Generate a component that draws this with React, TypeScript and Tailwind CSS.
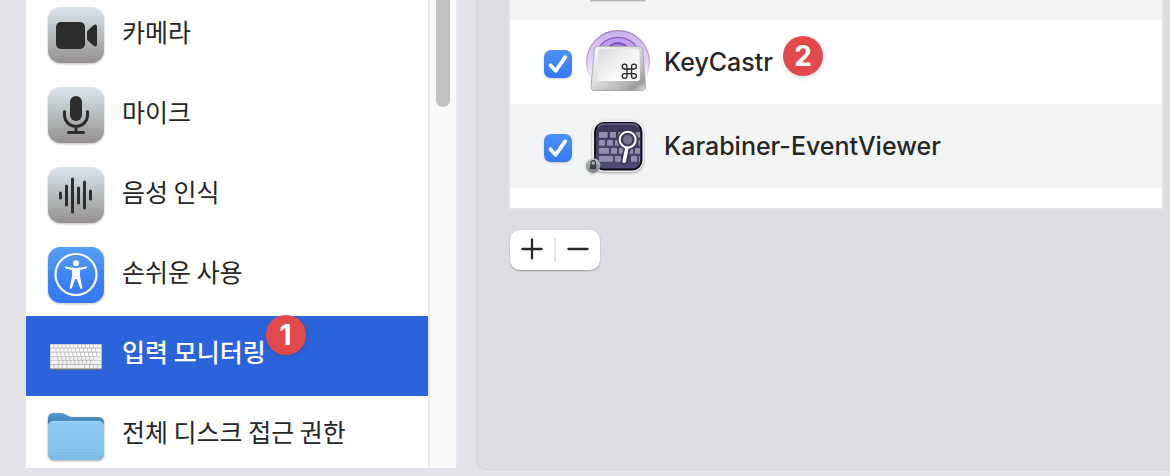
import { useState, type ReactNode } from "react";

function Tile({ tone, children }: { tone: "gray" | "blue"; children: ReactNode }) {
  return (
    <svg viewBox="0 0 56 56" className="h-14 w-14 shrink-0 overflow-visible drop-shadow-[0_1px_1px_rgba(0,0,0,0.25)]" aria-hidden="true">
      <defs>
        <linearGradient id="tile-gray" x1="0" y1="0" x2="0" y2="1">
          <stop offset="0" stopColor="#d9e5ec" />
          <stop offset="0.5" stopColor="#b7bcbe" />
          <stop offset="1" stopColor="#959190" />
        </linearGradient>
        <linearGradient id="tile-blue" x1="0" y1="0" x2="0" y2="1">
          <stop offset="0" stopColor="#55a0f7" />
          <stop offset="0.6" stopColor="#3b80f5" />
          <stop offset="1" stopColor="#3478f6" />
        </linearGradient>
      </defs>
      <rect width="56" height="56" rx="12.5" fill={tone === "gray" ? "url(#tile-gray)" : "url(#tile-blue)"} />
      {children}
    </svg>
  );
}

function CameraIcon() {
  return (
    <Tile tone="gray">
      <rect x="8" y="15" width="29" height="27" rx="5" fill="#2d2d2d" />
      <path d="M39 25.5V31.500q0 1.500 1.200 2.500l5.300 4.800q3.500 2 3.500-1.500V19.700q0-3.500-3.500-1.500L40.200 23q-1.200 1-1.200 2.500z" fill="#2d2d2d" />
    </Tile>
  );
}

function MicIcon() {
  return (
    <Tile tone="gray">
      <rect x="22" y="9" width="12" height="25" rx="6" fill="#2d2d2d" />
      <path d="M16.500 24.500v3.500a11.500 11.500 0 0 0 23 0v-3.500M28 39.500v6M20.500 45.500h15" fill="none" stroke="#2d2d2d" strokeWidth="3" strokeLinecap="round" />
    </Tile>
  );
}

function VoiceIcon() {
  return (
    <Tile tone="gray">
      <path d="M12.500 26v5M18.500 19v19M24.500 12v33M30.500 21v15M36.500 15v26M42.500 24v8" stroke="#2d2d2d" strokeWidth="3" strokeLinecap="round" />
    </Tile>
  );
}

function AccessibilityIcon() {
  return (
    <Tile tone="blue">
      <circle cx="28" cy="27.500" r="20.500" fill="none" stroke="#fff" strokeWidth="2.200" />
      <circle cx="28" cy="16.300" r="3" fill="#fff" />
      <path
        d="M17.800 19.600q5.200 1.300 10.200 1.300t10.200-1.300q1.100 0 1 1-.1.700-.9.900l-6.300 1.500v6.300l2.300 11.200q.1 1.200-1 1.300-.9 0-1.200-.9L28.700 32h-1.400l-3.400 8.900q-.3.900-1.200.9-1.100-.1-1-1.300L24 29.300V23l-6.300-1.500q-.8-.2-.9-.9-.1-1 1-1z"
        fill="#fff"
      />
    </Tile>
  );
}

const keyboardRows = [
  [0, 4, 8, 12, 16, 20, 24, 28, 32, 36, 40, 44, 48, 52],
  [0, 6, 10, 14, 18, 22, 26, 30, 34, 38, 42, 46, 52],
  [0, 7, 11, 15, 19, 23, 27, 31, 35, 39, 43, 47, 52],
  [0, 8, 12, 16, 20, 24, 28, 32, 36, 40, 44, 52],
  [0, 9, 13, 17, 21, 25, 29, 33, 37, 41, 52],
  [0, 4, 8, 12, 17, 35, 40, 44, 48, 52],
];

function KeyboardIcon() {
  return (
    <svg viewBox="0 0 56 56" className="h-14 w-14 shrink-0" aria-hidden="true">
      <rect x="2" y="17" width="52" height="26" rx="1" fill="#6f7076" />
      <rect x="2" y="17" width="52" height="25" rx="1" fill="#b0b0b3" />
      {keyboardRows.map((stops, row) =>
        stops.slice(0, -1).map((start, i) => (
          <rect key={`${row}-${start}`} x={2.4 + start * 0.99} y={17.4 + row * 4.05} width={(stops[i + 1] - start) * 0.99 - 0.7} height="3.400" rx="0.500" fill={row < 3 ? "#fdfdfd" : "#f0f0f1"} />
        )),
      )}
    </svg>
  );
}

function FolderIcon() {
  return (
    <svg viewBox="0 0 56 56" className="h-14 w-14 shrink-0 drop-shadow-[0_1px_1px_rgba(0,0,0,0.35)]" aria-hidden="true">
      <defs>
        <linearGradient id="folder-back" x1="0" y1="0" x2="0" y2="1">
          <stop offset="0" stopColor="#589bcd" />
          <stop offset="0.3" stopColor="#3e7fb8" />
        </linearGradient>
        <linearGradient id="folder-front" x1="0" y1="0" x2="0" y2="1">
          <stop offset="0" stopColor="#8ecaf5" />
          <stop offset="0.85" stopColor="#86c3ef" />
          <stop offset="1" stopColor="#79b6e2" />
        </linearGradient>
      </defs>
      <g transform="translate(0 1)">
        <path d="M0 11q0-6 5-6h8q3 0 5 1.700L20.500 8q1.500 1 4 1H50q6 0 6 6v20H0z" fill="url(#folder-back)" />
        <rect y="13" width="56" height="39" rx="6" fill="url(#folder-front)" />
        <path d="M0.500 18q0-4.600 5.500-4.600H50q5.500 0 5.500 4.600" fill="none" stroke="#a9dcfb" strokeWidth="0.800" />
        <path d="M1 45h54M1 48h54" stroke="#75b2df" strokeWidth="0.700" />
      </g>
    </svg>
  );
}

function KeyCastrIcon() {
  return (
    <svg viewBox="0 0 64 64" className="h-16 w-16 shrink-0" aria-hidden="true">
      <defs>
        <linearGradient id="kc-halo" x1="0" y1="0" x2="0" y2="1">
          <stop offset="0" stopColor="#c9aeec" />
          <stop offset="0.55" stopColor="#e6d9fa" />
          <stop offset="0.9" stopColor="#f6f0fe" stopOpacity="0" />
        </linearGradient>
        <linearGradient id="kc-edge" x1="0" y1="0" x2="0" y2="1">
          <stop offset="0" stopColor="#a183c8" />
          <stop offset="0.5" stopColor="#bda6dc" />
          <stop offset="0.85" stopColor="#d8c8f0" stopOpacity="0" />
        </linearGradient>
        <linearGradient id="kc-side" x1="0" y1="0" x2="1" y2="1">
          <stop offset="0" stopColor="#f6f6f6" />
          <stop offset="0.4" stopColor="#e2e2e2" />
          <stop offset="0.7" stopColor="#bdbdbd" />
          <stop offset="0.86" stopColor="#9a9a9a" />
          <stop offset="1" stopColor="#e0e0e0" />
        </linearGradient>
        <linearGradient id="kc-face" x1="0" y1="0" x2="1" y2="1">
          <stop offset="0" stopColor="#dadada" />
          <stop offset="0.6" stopColor="#f7f7f7" />
          <stop offset="1" stopColor="#ffffff" />
        </linearGradient>
      </defs>
      <circle cx="32" cy="32" r="31.300" fill="url(#kc-halo)" stroke="url(#kc-edge)" strokeWidth="1.300" />
      <circle cx="32" cy="30.300" r="23" fill="#c19df0" stroke="#875fc0" strokeWidth="1.300" />
      <circle cx="32" cy="30" r="17" fill="#b48cec" />
      <circle cx="32" cy="25" r="12" fill="#a077e2" stroke="#7446b8" strokeWidth="1.300" />
      <path d="M12 16.300h41q3.200 0 3.600 3L59.500 56q.3 4.500-3.700 4.500H8.700q-4 0-3.700-4.500L8.400 19.300q.4-3 3.600-3z" fill="url(#kc-side)" stroke="#9c9c9c" strokeWidth="0.800" />
      <path d="M15 19h35.500q3 0 3 3l.5 26q0 3-3 3H14q-3 0-2.800-3l.9-26q.1-3 2.900-3z" fill="url(#kc-face)" />
      <path
        d="M41 39h4.600v4.600H41zM41 39v-2.400a2.400 2.400 0 1 0-2.400 2.400zM45.600 39v-2.400a2.400 2.400 0 1 1 2.400 2.400zM41 43.600v2.400a2.400 2.400 0 1 1-2.400-2.400zM45.600 43.600v2.400a2.400 2.400 0 1 0 2.400-2.400z"
        fill="none"
        stroke="#262626"
        strokeWidth="1.300"
      />
    </svg>
  );
}

const eventViewerKeys = [
  [13, 18, 8.7], [24, 18, 6], [32.3, 18, 6], [50, 18, 4],
  [13, 26, 6], [21, 26, 6], [29, 26, 6.5], [46, 26, 5], [52.5, 26, 1.5],
  [13, 34, 10], [25, 34, 6], [33, 34, 4], [42, 34, 5], [49, 34, 5],
  [13, 42, 14], [29, 42, 6], [45, 42, 6], [53, 42, 1],
];

function EventViewerIcon() {
  return (
    <svg viewBox="0 0 64 64" className="h-16 w-16 shrink-0 drop-shadow-[0_1px_1px_rgba(0,0,0,0.35)]" aria-hidden="true">
      <defs>
        <linearGradient id="ev-lock" x1="0" y1="0" x2="0" y2="1">
          <stop offset="0" stopColor="#bfc6ca" />
          <stop offset="1" stopColor="#7b7f81" />
        </linearGradient>
        <linearGradient id="ev-body" x1="0" y1="0" x2="0" y2="1">
          <stop offset="0" stopColor="#3b3457" />
          <stop offset="1" stopColor="#514a75" />
        </linearGradient>
      </defs>
      <rect x="6" y="6" width="52" height="52" rx="12" fill="#e9eae9" />
      <rect x="9" y="9" width="46.500" height="46.500" rx="9" fill="url(#ev-body)" stroke="#0d0c12" strokeWidth="1.800" />
      <path d="M12 13q2-3 6-3h28q4 0 6.500 3" fill="none" stroke="#6b6488" strokeWidth="1.500" />
      {eventViewerKeys.map(([x, y, w]) => (
        <rect key={`${x}-${y}`} x={x} y={y} width={w} height="5.800" rx="0.900" fill="#938eaa" />
      ))}
      <path d="M41.200 34.500 38.200 47.500" stroke="#3b3459" strokeWidth="7" strokeLinecap="round" />
      <circle cx="41.700" cy="25.700" r="8" fill="#7b7598" stroke="#3b3459" strokeWidth="5" />
      <circle cx="41.700" cy="25.700" r="5.500" fill="#777194" stroke="#413a60" strokeWidth="1.500" />
      <circle cx="41.700" cy="25.700" r="8" fill="none" stroke="#fff" strokeWidth="2.100" />
      <path d="M40.700 34 40.500 36M40.200 37.500 38.200 47.200" stroke="#fff" strokeWidth="3.600" strokeLinecap="round" />
      <circle cx="7.200" cy="51.500" r="7.200" fill="url(#ev-lock)" />
      <path d="M5 51v-2.200a2.200 2.200 0 0 1 4.400 0V51" fill="none" stroke="#3e4143" strokeWidth="1.200" />
      <rect x="4" y="50.500" width="6.400" height="4.700" rx="0.800" fill="#3e4143" />
    </svg>
  );
}

function StepBadge({ children, className }: { children: ReactNode; className: string }) {
  return (
    <span className={`absolute left-full flex h-10 w-10 items-center justify-center rounded-full bg-[#e2494c] font-['Inter',sans-serif] text-[28px] leading-none font-bold text-white shadow-[0_2px_5px_rgba(0,0,0,0.12)] ${className}`}>
      {children}
    </span>
  );
}

const categories = [
  { label: "카메라", icon: <CameraIcon /> },
  { label: "마이크", icon: <MicIcon /> },
  { label: "음성 인식", icon: <VoiceIcon /> },
  { label: "손쉬운 사용", icon: <AccessibilityIcon /> },
  { label: "입력 모니터링", icon: <KeyboardIcon />, step: 1 },
  { label: "전체 디스크 접근 권한", icon: <FolderIcon /> },
];

function Sidebar() {
  const [selected, setSelected] = useState("입력 모니터링");
  return (
    <nav className="mb-2 flex w-[432px] shrink-0 overflow-hidden bg-white">
      <ul className="-mt-1 min-w-0 flex-1">
        {categories.map(({ label, icon, step }) => {
          const active = label === selected;
          return (
            <li key={label}>
              <button
                type="button"
                aria-current={active ? "page" : undefined}
                onClick={() => setSelected(label)}
                className={`flex h-20 w-full items-center gap-[18px] px-[22px] pb-0.5 text-left text-[25px] leading-8 ${active ? "bg-[#2b63da] font-medium text-white" : "text-[#262626]"}`}
              >
                {icon}
                <span className="relative -mt-2 whitespace-nowrap">
                  {label}
                  {step && <StepBadge className="-top-5">{step}</StepBadge>}
                </span>
              </button>
            </li>
          );
        })}
      </ul>
      <div className="w-[30px] shrink-0 border-x-2 border-[#e8e8e8] bg-[#fafafa] px-1.5">
        <div className="h-[107px] rounded-b-full bg-[#c1c1c1]" />
      </div>
    </nav>
  );
}

function AppRow({ id, label, icon, step, className }: { id: string; label: string; icon: ReactNode; step?: number; className: string }) {
  return (
    <li className={`flex h-21 items-center gap-3.5 pl-[34px] ${className}`}>
      <span className="mt-1 grid h-7 w-7 shrink-0">
        <input
          id={id}
          type="checkbox"
          defaultChecked
          className="peer col-start-1 row-start-1 h-7 w-7 appearance-none rounded-[7px] bg-white shadow-[0_1px_2px_rgba(0,0,0,0.2)] checked:bg-linear-to-b checked:from-[#4b92f7] checked:to-[#3478f6]"
        />
        <svg viewBox="0 0 28 28" className="pointer-events-none invisible col-start-1 row-start-1 h-7 w-7 peer-checked:visible" aria-hidden="true">
          <path d="M6.500 15.200 11.600 20.800 21.300 7.200" fill="none" stroke="#fff" strokeWidth="3.800" strokeLinecap="round" strokeLinejoin="round" />
        </svg>
      </span>
      {icon}
      <label htmlFor={id} className="relative font-['Inter',sans-serif] text-[25px] leading-8 font-[450] whitespace-nowrap text-[#262626]">
        {label}
        {step && <StepBadge className="-top-2.5 ml-2.5">{step}</StepBadge>}
      </label>
    </li>
  );
}

export default function App() {
  return (
    <div className="flex h-screen overflow-hidden bg-[#e5e3e9] pl-[26px] font-['Noto_Sans_CJK_KR',sans-serif]">
      <Sidebar />
      <main className="mb-1.5 ml-[18px] min-w-0 flex-1 rounded-bl-[10px] border-b border-l border-[#d3d0d7] bg-[#dedbe2] pr-1.5 pl-[31px]">
        <ul className="border-x-2 border-b-2 border-[#e3e3e4] bg-white pb-5">
          <li className="h-5 bg-[#f3f5f4] pl-20" aria-hidden="true">
            <div className="h-px w-14 rounded-b-full bg-[#b5b6b6] shadow-[0_1px_1px_rgba(0,0,0,0.12)]" />
          </li>
          <AppRow id="keycastr" label="KeyCastr" icon={<KeyCastrIcon />} step={2} className="bg-white" />
          <AppRow id="event-viewer" label="Karabiner-EventViewer" icon={<EventViewerIcon />} className="bg-[#f3f5f4]" />
        </ul>
        <div className="mt-5 ml-0.5 inline-flex h-10 items-center rounded-[10px] bg-white shadow-[0_1px_2px_rgba(0,0,0,0.3)]">
          <button type="button" aria-label="추가" className="flex h-10 w-11 items-center justify-center">
            <svg viewBox="0 0 22 22" className="-mt-0.5 h-[22px] w-[22px]" aria-hidden="true">
              <path d="M1.500 11h19M11 1.500v19" stroke="#262626" strokeWidth="2.300" strokeLinecap="round" />
            </svg>
          </button>
          <span className="h-6 w-0.5 bg-[#e4e4e4]" />
          <button type="button" aria-label="제거" className="flex h-10 w-11 items-center justify-center">
            <svg viewBox="0 0 22 22" className="-mt-0.5 h-[22px] w-[22px]" aria-hidden="true">
              <path d="M1.500 11h19" stroke="#262626" strokeWidth="2.300" strokeLinecap="round" />
            </svg>
          </button>
        </div>
      </main>
    </div>
  );
}
